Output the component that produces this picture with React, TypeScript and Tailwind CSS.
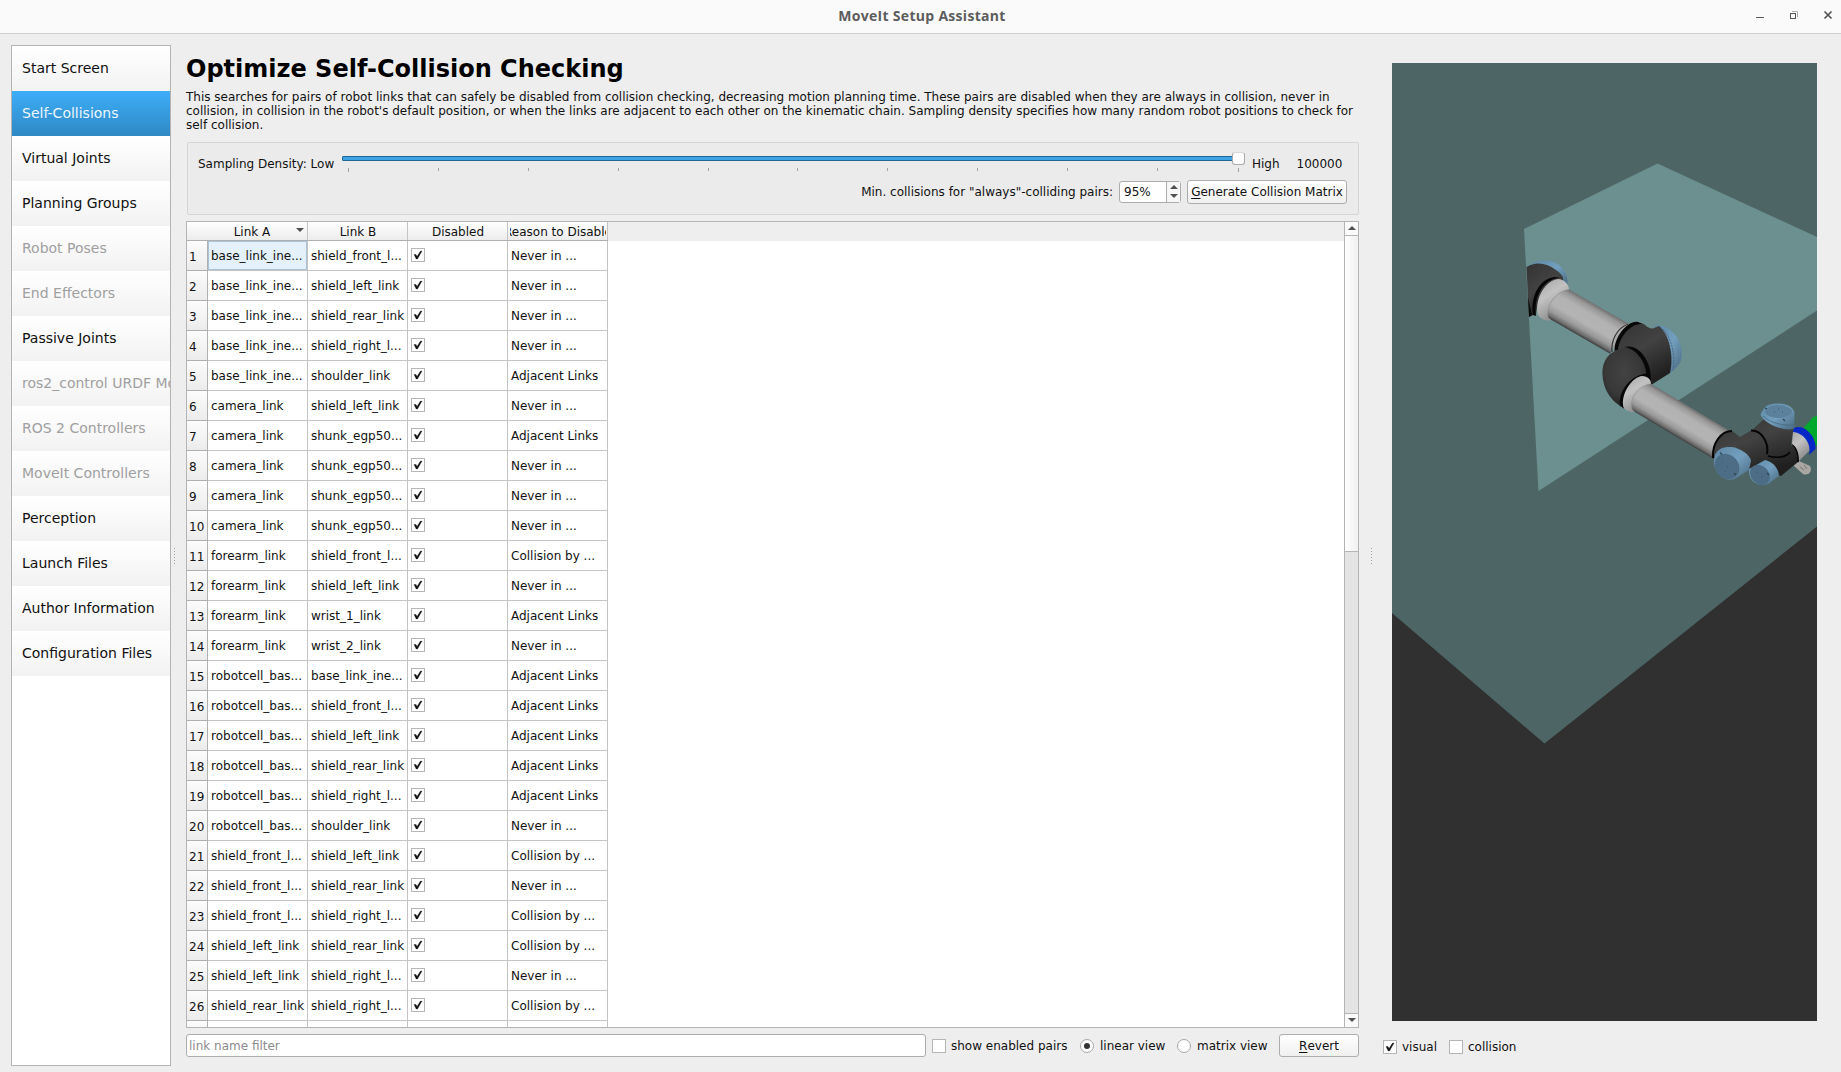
import React from "react";

const nav: [string, boolean][] = [
  ["Start Screen", true], ["Self-Collisions", true], ["Virtual Joints", true], ["Planning Groups", true],
  ["Robot Poses", false], ["End Effectors", false], ["Passive Joints", true], ["ros2_control URDF Mo", false],
  ["ROS 2 Controllers", false], ["MoveIt Controllers", false], ["Perception", true], ["Launch Files", true],
  ["Author Information", true], ["Configuration Files", true],
];

const N = "Never in ...", A = "Adjacent Links", C = "Collision by ...";
const rows: [string, string, string][] = [
  ["base_link_ine...", "shield_front_l...", N], ["base_link_ine...", "shield_left_link", N],
  ["base_link_ine...", "shield_rear_link", N], ["base_link_ine...", "shield_right_l...", N],
  ["base_link_ine...", "shoulder_link", A], ["camera_link", "shield_left_link", N],
  ["camera_link", "shunk_egp50...", A], ["camera_link", "shunk_egp50...", N],
  ["camera_link", "shunk_egp50...", N], ["camera_link", "shunk_egp50...", N],
  ["forearm_link", "shield_front_l...", C], ["forearm_link", "shield_left_link", N],
  ["forearm_link", "wrist_1_link", A], ["forearm_link", "wrist_2_link", N],
  ["robotcell_bas...", "base_link_ine...", A], ["robotcell_bas...", "shield_front_l...", A],
  ["robotcell_bas...", "shield_left_link", A], ["robotcell_bas...", "shield_rear_link", A],
  ["robotcell_bas...", "shield_right_l...", A], ["robotcell_bas...", "shoulder_link", N],
  ["shield_front_l...", "shield_left_link", C], ["shield_front_l...", "shield_rear_link", N],
  ["shield_front_l...", "shield_right_l...", C], ["shield_left_link", "shield_rear_link", C],
  ["shield_left_link", "shield_right_l...", N], ["shield_rear_link", "shield_right_l...", C],
];

function Check({ on }: { on?: boolean }) {
  return (
    <span className="flex h-[14px] w-[14px] shrink-0 items-center justify-center border border-[#b6b6b6] bg-white">
      {on && (
        <svg width="10" height="10" viewBox="0 0 10 10" className="block">
          <path d="M1 4.500 L3 4.500 L4 6.500 L7.500 1 L9 1 L4.500 9 L3.200 9Z" fill="#111" stroke="#111" strokeWidth=".3" />
        </svg>
      )}
    </span>
  );
}

function Radio({ on }: { on?: boolean }) {
  return (
    <span className="flex h-[14px] w-[14px] shrink-0 items-center justify-center rounded-full border border-[#a8a8a8] bg-white">
      {on && <span className="h-[6px] w-[6px] rounded-full bg-[#333]" />}
    </span>
  );
}

function Tri({ up }: { up?: boolean }) {
  return (
    <svg width="8" height="4" viewBox="0 0 8 4" className="block">
      <path d={up ? "M0 4 L4 0 L8 4Z" : "M0 0 L4 4 L8 0Z"} fill="#505050" />
    </svg>
  );
}

function Grip() {
  return (
    <div className="flex flex-col gap-[2px]">
      {[0, 1, 2, 3, 4, 5].map((i) => <span key={i} className="h-px w-px bg-[#a5a5a5]" />)}
    </div>
  );
}

function Head({ children, sort }: { children: React.ReactNode; sort?: boolean }) {
  return (
    <div className="relative flex h-full w-[100px] shrink-0 border-r border-[#c4c4c4] pr-px pl-[2px]">
      <div className="flex flex-1 items-center justify-center overflow-hidden pt-px whitespace-nowrap">{children}</div>
      {sort && <span className="absolute top-[6px] right-[3px]"><Tri /></span>}
    </div>
  );
}

function Scene() {
  return (
    <svg width="425" height="958" viewBox="1392 63 425 958" className="block">
      <defs>
        <linearGradient id="tube" x1="0" y1="0" x2="0" y2="1">
          <stop offset="0" stopColor="#707070" /><stop offset=".12" stopColor="#999" /><stop offset=".3" stopColor="#b2b2b2" />
          <stop offset=".6" stopColor="#b4b4b4" /><stop offset=".8" stopColor="#999" /><stop offset=".93" stopColor="#6b6b6b" /><stop offset="1" stopColor="#3c3c3c" />
        </linearGradient>
        <linearGradient id="collar" x1="0" y1="0" x2=".5" y2="1">
          <stop offset="0" stopColor="#a5a5a5" /><stop offset=".45" stopColor="#c2c2c2" /><stop offset="1" stopColor="#8a8a8a" />
        </linearGradient>
        <linearGradient id="body" x1="0" y1="0" x2=".5" y2="1">
          <stop offset="0" stopColor="#333" /><stop offset=".5" stopColor="#424242" /><stop offset="1" stopColor="#202020" />
        </linearGradient>
        <radialGradient id="elbow" cx=".45" cy=".4" r=".65">
          <stop offset="0" stopColor="#434343" /><stop offset=".6" stopColor="#383838" /><stop offset="1" stopColor="#1d1d1d" />
        </radialGradient>
        <linearGradient id="cap" x1="0" y1="0" x2="1" y2="1">
          <stop offset="0" stopColor="#5d86a3" /><stop offset=".5" stopColor="#739fbe" /><stop offset="1" stopColor="#48687f" />
        </linearGradient>
      </defs>
      <rect x="1392" y="63" width="425" height="958" fill="#4d6665" />
      <path d="M1392 613 L1544.500 743.500 L1817 526.500 V1021 H1392Z" fill="#303030" />
      <path d="M1524 229 L1657.500 163.500 L1817 237 V310.500 L1538.500 491Z" fill="#6c908f" />

      <path d="M1528 266 C1536 260 1550 258 1559 265 C1568 272 1568 281 1567 286 L1550 279Z" fill="url(#cap)" />
      <path d="M1526.500 267 C1535 262 1545 262 1556 270 C1562 274 1564 278 1563 280 C1550 280 1538 295 1536 314 L1532 315.500 L1529 317Z" fill="url(#body)" />
      <path d="M1560 278 C1545 278 1533 296 1536 316 L1533 315 C1530 298 1539 278 1555 277Z" fill="#060606" />
      <path d="M1528 297 L1532 315 L1529 317Z" fill="#0a0a0a" />
      <g transform="translate(1560 304.500) rotate(30)">
        <path d="M-9 -17.500 H78 Q66 0 68 17.500 H-9Z" fill="url(#tube)" />
      </g>
      <path d="M1559 279 C1565 280 1569 285 1569 289.500 C1557 291 1546 304 1548 317 L1551 320 C1547 322 1541 319 1538 315 C1534 299 1546 279 1559 279Z" fill="url(#collar)" />
      <path d="M1569 289.500 C1557 291 1546 304 1548 317" fill="none" stroke="#929292" strokeWidth=".7" />
      <path d="M1628 324.500 C1616 328 1611 342 1612 352" fill="none" stroke="#333" strokeWidth="1.200" />
      <path d="M1630 325 C1619 329 1614.500 340 1614.500 350" fill="none" stroke="#a8a8a8" strokeWidth="2" />

      <path d="M1654 326 C1662 323 1674 330 1679 341 C1683 352 1683 361 1677 367 L1670 373 L1662 340Z" fill="url(#cap)" />
      <path d="M1616 350 C1617 335 1627 324 1637 322.500 C1646 322 1646 329 1653 328.500 L1659 326 C1670 335 1674 357 1670 373 L1651 385 L1631 356Z" fill="url(#body)" />
      <path d="M1642 324 C1631 323 1619 337 1618 350 L1614.500 351 C1614 337 1628 320 1638 322Z" fill="#080808" />
      <path d="M1663 329 C1673 340 1675 357 1673 371" fill="none" stroke="#486a83" strokeWidth="1" strokeDasharray="2 1" />
      <path d="M1624 348 C1640 344 1650 360 1649 376 C1634 377 1622 393 1624 408.500 C1606 398 1602 383 1602.500 370 C1604 356 1613 350 1624 348Z" fill="url(#elbow)" />
      <path d="M1624 347 C1640 343 1652 363 1651 381 L1646.500 375 C1646 361 1635 348 1624 347Z" fill="#070707" />
      <path d="M1647 373.500 C1630 375 1618 392 1620 405 L1624 408.500 C1621 394 1633 379 1650 378Z" fill="#070707" />
      <g transform="translate(1643 398) rotate(30.800)">
        <rect x="-9" y="-16.200" width="101" height="32.400" fill="url(#tube)" />
      </g>
      <path d="M1642 376 C1648 376 1651 380 1651 384 C1640 385 1629 397 1632 409 L1635 412 C1629 413 1623 409 1623 405 C1622 391 1633 377 1642 376Z" fill="url(#collar)" />
      <path d="M1651 384 C1640 385 1629 397 1632 409" fill="none" stroke="#929292" strokeWidth=".7" />

      <path d="M1793 465 L1799 461 L1810 466 C1813 472 1808 476 1803 474Z" fill="#aaa6a4" />
      <path d="M1800 467 l4 3 M1804 465 l3 4" stroke="#6d6969" strokeWidth=".8" />
      <path d="M1713 458 C1711 440 1724 430 1732 431 L1740 437 L1752 430 L1763 420 L1772 414 L1794 427 L1791 445 L1796 448 C1799 453 1799 458 1798 462 L1781 476 L1764 470 L1744 470Z" fill="url(#body)" />
      <path d="M1732 431 C1721 431 1712 443 1713 458" fill="none" stroke="#050505" strokeWidth="2" />
      <path d="M1751 430.500 C1762 430 1769 443 1767 454" fill="none" stroke="#050505" strokeWidth="2" />
      <path d="M1768 456 C1776 458 1786 458 1790 452" fill="none" stroke="#050505" strokeWidth="1.500" />
      <path d="M1792 444 C1797 448 1799 456 1798 462" fill="none" stroke="#050505" strokeWidth="1.600" />
      <path d="M1761 416 C1760 413 1762 412 1763 410 C1765 405 1771 403 1779 403.500 C1789 404 1795 409 1794.500 414 L1794 429 C1784 431 1768 426 1761 416Z" fill="url(#cap)" />
      <path d="M1763 416 C1770 423 1784 426 1794 425" fill="none" stroke="#496a82" strokeWidth=".8" />
      <ellipse cx="1778.500" cy="411.500" rx="13.500" ry="6.500" fill="#5c819d" />
      <path d="M1715 455 C1718 448 1725 446 1735 447.500 C1745 451 1751 457 1751 461 L1749 470 L1736 478 C1726 484 1713 473 1714 460Z" fill="url(#cap)" />
      <ellipse cx="1727" cy="466.500" rx="13.500" ry="11.500" transform="rotate(50 1727 466.500)" fill="#4c6d85" />
      <path d="M1749 469 L1765 460 C1774 462 1779 470 1779 476 L1768 484 C1758 488 1748 481 1749 469Z" fill="url(#cap)" />
      <ellipse cx="1760" cy="475" rx="11" ry="9" transform="rotate(50 1760 475)" fill="#4c6d85" />
      <path d="M1720 452.500 l2 2 M1734 473 l2 2 M1767 473 l2 2 M1783 419 l2 2 M1765 408 l2 1" stroke="#2d4453" strokeWidth="1.200" />
      <path d="M1722 462 h1 M1727 467 h1 M1725 471 h1 M1757 473 h1 M1761 477 h1 M1778 409 h1 M1782 412 h1 M1774 412 h1" stroke="#3d586b" strokeWidth="1" />
      <path d="M1793 432 C1800 430 1805 432 1808 438 L1810 450 L1799 461 C1799 453 1797 447 1792 444Z" fill="url(#collar)" />
      <path d="M1801 431 L1813 417 L1817 416 V445 L1813 448Z" fill="#00a82c" />
      <path d="M1794 428 C1805 423 1817 438 1815.500 449 L1809 455 C1812 444 1804 433 1793 432Z" fill="#0527c6" />
    </svg>
  );
}

const btn = "flex items-center justify-center rounded-[3px] border border-[#adadad] bg-linear-to-b from-white to-[#f0f0f0] whitespace-nowrap";

export default function App() {
  return (
    <div className="flex h-[1072px] w-[1841px] flex-col overflow-hidden bg-[#eee] font-['DejaVu_Sans',sans-serif] text-[12px] leading-[14px] text-[#111]">
      <header className="flex h-[34px] shrink-0 items-center border-b border-[#cdcdcd] bg-[#fafafa]">
        <div className="w-[144px] shrink-0" />
        <h1 className="flex-1 pb-px text-center font-['Open_Sans',sans-serif] text-[14px] font-bold tracking-[0.3px] text-[#5d5d5d]">MoveIt Setup Assistant</h1>
        <svg width="141" height="33" viewBox="0 0 141 33" className="block shrink-0" fill="none" stroke="#555">
          <path d="M56 17.500 H64" />
          <path d="M92 11.500 H97.500 V17" stroke="#aaa" />
          <rect x="90.500" y="13.500" width="5" height="5" />
          <path d="M124.500 11.500 L131.500 18.500 M131.500 11.500 L124.500 18.500" strokeWidth="1.700" />
        </svg>
      </header>

      <div className="flex min-h-0 flex-1">
        <nav className="mt-[11px] ml-[11px] h-[1021px] w-[160px] shrink-0 overflow-hidden border border-[#b4b4b4] bg-white text-[14px]">
          {nav.map(([t, on], i) => (
            <div
              key={t}
              className={"flex h-[45px] items-center overflow-hidden pb-[2px] pl-[10px] whitespace-nowrap " +
                (i === 1 ? "bg-linear-to-b from-[#3daef9] to-[#2f88c3] text-[#eef6fc]" : "bg-linear-to-b from-white to-[#f2f2f2] " + (on ? "" : "text-[#a0a0a0]"))}
            >
              {t}
            </div>
          ))}
        </nav>
        <div className="flex w-[15px] shrink-0 items-center pt-[6px] pl-[3px]"><Grip /></div>

        <main className="flex w-[1173px] shrink-0 flex-col">
          <h2 className="mt-[19px] h-[32px] text-[24px] leading-[32px] font-bold whitespace-nowrap text-black">Optimize Self-Collision Checking</h2>
          <p className="mt-[5px] h-[42px] tracking-[-0.006px] whitespace-nowrap">
            This searches for pairs of robot links that can safely be disabled from collision checking, decreasing motion planning time. These pairs are disabled when they are always in collision, never in<br />
            collision, in collision in the robot's default position, or when the links are adjacent to each other on the kinematic chain. Sampling density specifies how many random robot positions to check for<br />
            self collision.
          </p>

          <section className="mt-[10px] ml-px h-[73px] rounded-[2px] border border-[#d5d5d5] bg-[#ebebeb] pl-[10px]">
            <div className="flex h-[34px] items-start">
              <span className="mt-[14px] w-[144px] whitespace-nowrap">Sampling Density: Low</span>
              <div className="relative mt-[13px] h-[16px] w-[904px]">
                <div className="h-[5px] w-[896px] rounded-[1px] border border-[#206894] bg-[#3fa2e3]" />
                <div className="flex pt-[7px] pl-[6px]">
                  {[90, 90, 90, 90, 89, 90, 90, 90, 90, 81, 1].map((w, i) => (
                    <span key={i} className="shrink-0" style={{ width: w }}>
                      <i className={"block w-px bg-[#a2a2a2] " + (i === 0 || i === 10 ? "h-[4px]" : "h-[3px]")} />
                    </span>
                  ))}
                </div>
                <span className="absolute -top-[4px] left-[890px] h-[13px] w-[13px] rounded-[3px] border border-t-[#d8d8d8] border-[#ababab] bg-[#fcfcfc]" />
              </div>
              <span className="mt-[14px] ml-[6px] w-[44.5px]">High</span>
              <span className="mt-[14px]">100000</span>
            </div>
            <div className="mt-[2px] flex h-[25px] items-center justify-end pr-[11px]">
              <span className="mr-[6px] whitespace-nowrap">Min. collisions for "always"-colliding pairs:</span>
              <span className="mr-[6px] flex h-[22px] w-[62px] rounded-[3px] border border-[#adadad] bg-white">
                <span className="flex flex-1 items-center pl-[4px]">95%</span>
                <span className="flex w-[14px] flex-col items-center justify-center gap-[5px] border-l border-[#adadad] bg-[#f6f6f6] pb-px"><Tri up /><Tri /></span>
              </span>
              <button className={btn + " h-[24px] w-[160px]"}><u className="underline-offset-2">G</u>enerate Collision Matrix</button>
            </div>
          </section>

          <section className="mt-[6px] flex h-[807px] border border-[#b4b4b4] bg-white">
            <div className="flex min-w-0 flex-1 flex-col overflow-hidden">
              <div className="flex h-[19px] shrink-0 bg-[#eee]">
                <div className="flex w-[421px] border-b border-[#b0b0b0] bg-linear-to-b from-white to-[#ececec]">
                  <div className="w-[21px] shrink-0" />
                  <Head sort><span className="pr-[12px]">Link A</span></Head><Head>Link B</Head><Head>Disabled</Head><Head>Reason to Disable</Head>
                </div>
              </div>
              <div className="min-h-0 flex-1 overflow-hidden">
                {[...rows, ["", "", ""]].map(([a, b, r], i) => (
                  <div key={i} className="flex h-[30px] w-[421px]">
                    <div className="flex w-[21px] shrink-0 items-center border-r border-b border-[#b0b0b0] bg-linear-to-b from-[#fcfcfc] to-[#ececec] pt-[2px] pl-[2px]">{a && i + 1}</div>
                    <div className={"flex w-[100px] shrink-0 items-center border-r border-b border-[#c4c4c4] pt-px pl-[3px] whitespace-nowrap " + (i === 0 ? "bg-[#e4f1fa] shadow-[inset_0_0_0_1px_#a9c4d8]" : "")}>{a}</div>
                    <div className="flex w-[100px] shrink-0 items-center border-r border-b border-[#c4c4c4] pt-px pl-[3px] whitespace-nowrap">{b}</div>
                    <div className="flex w-[100px] shrink-0 items-center border-r border-b border-[#c4c4c4] pb-px pl-[3px]">{a && <Check on />}</div>
                    <div className="flex w-[100px] shrink-0 items-center border-r border-b border-[#c4c4c4] pt-px pl-[3px] whitespace-nowrap">{r}</div>
                  </div>
                ))}
              </div>
            </div>
            <div className="flex w-[14px] shrink-0 flex-col border-l border-[#b4b4b4] bg-[#e4e4e4]">
              <div className="flex h-[14px] items-center justify-center border-b border-[#b4b4b4] bg-[#fafafa] pb-px"><Tri up /></div>
              <div className="h-[316px] border-b border-[#b4b4b4] bg-linear-to-r from-white to-[#f0f0f0]" />
              <div className="flex-1" />
              <div className="flex h-[14px] items-center justify-center border-t border-[#b4b4b4] bg-[#fafafa] pb-[2px]"><Tri /></div>
            </div>
          </section>

          <div className="mt-[6px] flex h-[23px] items-center">
            <div className="flex h-[23px] w-[740px] items-center rounded-[3px] border border-[#adadad] bg-white pl-[2px] text-[#8c8c8c]">link name filter</div>
            <label className="ml-[6px] flex w-[148px] items-center gap-[5px] whitespace-nowrap"><Check />show enabled pairs</label>
            <label className="flex w-[97px] items-center gap-[6px] whitespace-nowrap"><Radio on />linear view</label>
            <label className="flex w-[102px] items-center gap-[6px] whitespace-nowrap"><Radio />matrix view</label>
            <button className={btn + " h-[23px] w-[80px]"}><u className="underline-offset-2">R</u>evert</button>
          </div>
        </main>

        <div className="flex w-[24px] shrink-0 items-center pt-[6px] pl-[12px]"><Grip /></div>

        <aside className="pt-[29px]">
          <div className="ml-[9px]"><Scene /></div>
          <div className="mt-[19px] flex">
            <label className="flex w-[66px] items-center gap-[5px]"><Check on />visual</label>
            <label className="flex items-center gap-[5px]"><Check />collision</label>
          </div>
        </aside>
      </div>
    </div>
  );
}
